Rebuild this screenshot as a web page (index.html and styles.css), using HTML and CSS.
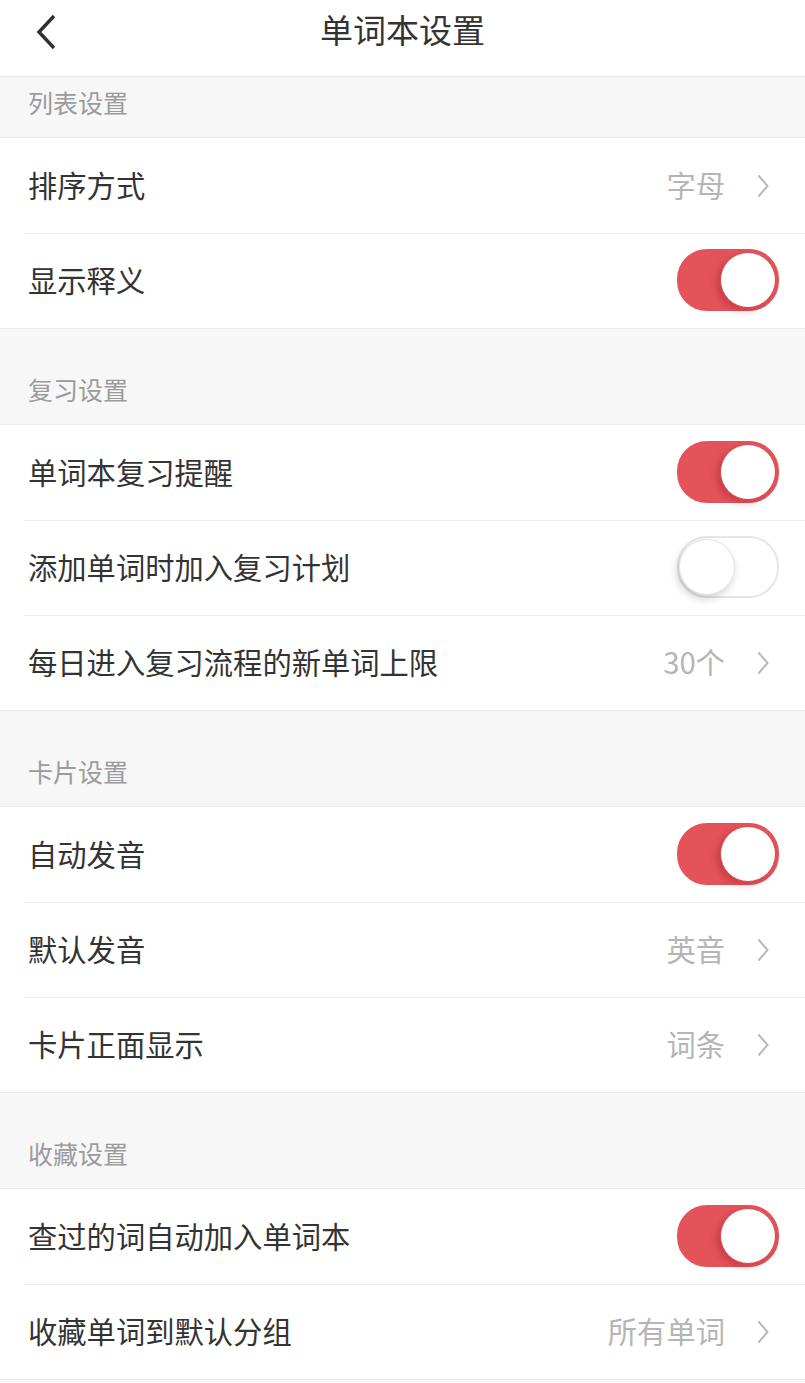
FILE: index.html
```html
<!DOCTYPE html>
<html>
<head>
    <meta charset="utf-8">
    <meta name="viewport" content="width=device-width, initial-scale=1">
    <title>单词本设置</title>
    <link rel="stylesheet" href="styles.css">
</head>
<body>
    <header class="nav-bar">
        <button class="back" title="返回">
            <svg width="22" height="36" viewBox="0 0 22 36"><path d="M19 2 L4 18 L19 34" fill="none" stroke="#2f2f35" stroke-width="3.4"/></svg>
        </button>
        <h1>单词本设置</h1>
    </header>

    <div class="section-title first">列表设置</div>
    <ul class="group">
        <li class="row">
            <span class="label">排序方式</span>
            <span class="value">字母</span>
            <svg class="chevron" width="12" height="24" viewBox="0 0 12 24"><path d="M1.5 1.5 L10.5 12 L1.5 22.5" fill="none" stroke="#b8b8b8" stroke-width="2"/></svg>
        </li>
        <li class="row">
            <span class="label">显示释义</span>
            <span class="switch on"><span class="knob"></span></span>
        </li>
    </ul>

    <div class="section-title">复习设置</div>
    <ul class="group">
        <li class="row">
            <span class="label">单词本复习提醒</span>
            <span class="switch on"><span class="knob"></span></span>
        </li>
        <li class="row">
            <span class="label">添加单词时加入复习计划</span>
            <span class="switch"><span class="knob"></span></span>
        </li>
        <li class="row">
            <span class="label">每日进入复习流程的新单词上限</span>
            <span class="value">30个</span>
            <svg class="chevron" width="12" height="24" viewBox="0 0 12 24"><path d="M1.5 1.5 L10.5 12 L1.5 22.5" fill="none" stroke="#b8b8b8" stroke-width="2"/></svg>
        </li>
    </ul>

    <div class="section-title">卡片设置</div>
    <ul class="group">
        <li class="row">
            <span class="label">自动发音</span>
            <span class="switch on"><span class="knob"></span></span>
        </li>
        <li class="row">
            <span class="label">默认发音</span>
            <span class="value">英音</span>
            <svg class="chevron" width="12" height="24" viewBox="0 0 12 24"><path d="M1.5 1.5 L10.5 12 L1.5 22.5" fill="none" stroke="#b8b8b8" stroke-width="2"/></svg>
        </li>
        <li class="row">
            <span class="label">卡片正面显示</span>
            <span class="value">词条</span>
            <svg class="chevron" width="12" height="24" viewBox="0 0 12 24"><path d="M1.5 1.5 L10.5 12 L1.5 22.5" fill="none" stroke="#b8b8b8" stroke-width="2"/></svg>
        </li>
    </ul>

    <div class="section-title">收藏设置</div>
    <ul class="group">
        <li class="row">
            <span class="label">查过的词自动加入单词本</span>
            <span class="switch on"><span class="knob"></span></span>
        </li>
        <li class="row">
            <span class="label">收藏单词到默认分组</span>
            <span class="value">所有单词</span>
            <svg class="chevron" width="12" height="24" viewBox="0 0 12 24"><path d="M1.5 1.5 L10.5 12 L1.5 22.5" fill="none" stroke="#b8b8b8" stroke-width="2"/></svg>
        </li>
    </ul>
</body>
</html>
```

FILE: styles.css
```css
body {
    margin: 0;
    background: #f7f7f7;
    color: #333;
    font-family: "Noto Sans CJK SC", "Noto Sans", sans-serif;
}
.nav-bar {
    position: relative;
    height: 76px;
    background: #fff;
    border-bottom: 1px solid #e8e8e8;
    display: flex;
    align-items: center;
    justify-content: center;
}
.nav-bar h1 {
    margin: 0 0 18px;
    font-size: 33px;
    font-weight: 400;
    color: #333;
}
.back {
    position: absolute;
    left: 35px;
    top: 14px;
    padding: 0;
    border: 0;
    background: none;
    line-height: 0;
}
.section-title {
    height: 60px;
    padding: 35px 28px 0;
    line-height: 51px;
    font-size: 25px;
    color: #9b9b9b;
    border-bottom: 1px solid #ececec;
}
.section-title.first {
    padding-top: 0;
}
.group {
    margin: 0;
    padding: 0;
    list-style-type: none;
    background: #fff;
    border-bottom: 1px solid #ececec;
}
.row {
    height: 95px;
    display: flex;
    align-items: center;
    padding: 0 27px 0 28px;
}
.row + .row {
    height: 94px;
    border-top: 1px solid #ececec;
    margin-left: 24px;
    padding-left: 4px;
}
.label {
    flex: 1;
    font-size: 29.3px;
    margin-bottom: 4px;
}
.value {
    font-size: 29.3px;
    color: #b5b5b5;
    margin-bottom: 4px;
}
.chevron {
    margin: 0 9px 0 32px;
}
.switch {
    width: 98px;
    height: 58px;
    border-radius: 30px;
    border: 2px solid #e6e6e6;
    background: #fff;
    position: relative;
    box-sizing: content-box;
    margin: 0 -1px 2px 0;
}
.switch .knob {
    position: absolute;
    left: 0;
    top: 1px;
    width: 54px;
    height: 54px;
    border-radius: 50%;
    background: #fff;
    border: 1px solid #e2e2e2;
    box-shadow: -2px 4px 8px rgba(0, 0, 0, .18);
}
.switch.on {
    background: #e5535a;
    border-color: #e5535a;
}
.switch.on .knob {
    left: auto;
    right: 1px;
    border: 1px solid #d34850;
    box-shadow: -4px 3px 6px rgba(150, 30, 40, .35);
}
```
